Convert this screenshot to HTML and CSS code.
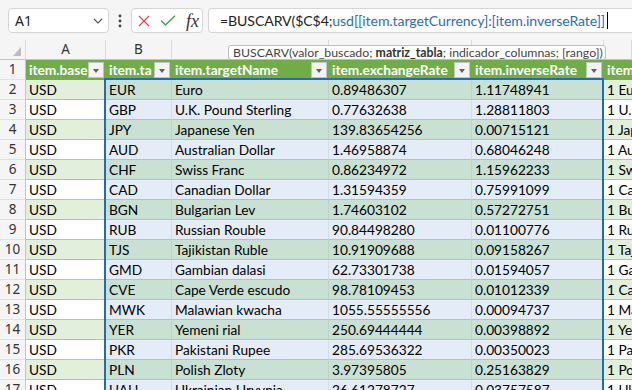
FILE: index.html
```html
<!DOCTYPE html>
<html lang="es">
<head>
  <meta charset="UTF-8">
  <meta name="viewport" content="width=device-width, initial-scale=1.0">
  <title>Hoja de cálculo</title>
  <link rel="stylesheet" href="styles.css">
</head>
<body>
  <div class="app">
    <!-- formula bar -->
    <div class="formula-bar">
      <div class="name-box">
        <span>A1</span>
        <svg class="chevron" width="10" height="6" viewBox="0 0 10 6"><path d="M1 1 L5 5 L9 1" fill="none" stroke="#555" stroke-width="1.2"/></svg>
      </div>
      <div class="dots">
        <svg width="4" height="14" viewBox="0 0 4 14"><circle cx="2" cy="2" r="1.4" fill="#444"/><circle cx="2" cy="7" r="1.4" fill="#444"/><circle cx="2" cy="12" r="1.4" fill="#444"/></svg>
      </div>
      <div class="fx-box">
        <svg class="icon-cancel" width="12" height="12" viewBox="0 0 12 12"><path d="M1 1 L11 11 M11 1 L1 11" stroke="#e5484d" stroke-width="1.3" fill="none"/></svg>
        <svg class="icon-enter" width="16" height="11" viewBox="0 0 16 11"><path d="M1 5.5 L5.5 10 L15 0.8" stroke="#3aa356" stroke-width="1.4" fill="none"/></svg>
        <span class="fx">fx</span>
      </div>
      <div class="formula-input">
        <span>=BUSCARV($C$4;</span><span class="ref">usd[[item.targetCurrency]:[item.inverseRate]]</span><span class="caret"></span>
      </div>
    </div>

    <!-- grid -->
    <div class="sheet">
      <div class="row col-heads">
        <div class="corner"><svg width="8" height="9" viewBox="0 0 8 9"><path d="M8 0 L8 9 L0 9 Z" fill="#bdbdbd"/></svg></div>
        <div class="ch">A</div><div class="ch">B</div><div class="ch"></div><div class="ch"></div><div class="ch"></div><div class="ch"></div>
      </div>

      <div class="row table-head">
        <div class="rh">1</div>
        <div class="c">item.base<span class="filter"></span></div>
        <div class="c">item.ta<span class="filter"></span></div>
        <div class="c">item.targetName<span class="filter"></span></div>
        <div class="c">item.exchangeRate<span class="filter"></span></div>
        <div class="c">item.inverseRate<span class="filter"></span></div>
        <div class="c">item.targetDescription</div>
      </div>

      <div class="row band"><div class="rh">2</div><div class="c">USD</div><div class="c">EUR</div><div class="c">Euro</div><div class="c">0.89486307</div><div class="c">1.11748941</div><div class="c">1 Euro = 1.11748941 USD</div></div>
      <div class="row"><div class="rh">3</div><div class="c">USD</div><div class="c">GBP</div><div class="c">U.K. Pound Sterling</div><div class="c">0.77632638</div><div class="c">1.28811803</div><div class="c">1 U.K. Pound Sterling</div></div>
      <div class="row band"><div class="rh">4</div><div class="c">USD</div><div class="c">JPY</div><div class="c">Japanese Yen</div><div class="c">139.83654256</div><div class="c">0.00715121</div><div class="c">1 Japanese Yen</div></div>
      <div class="row"><div class="rh">5</div><div class="c">USD</div><div class="c">AUD</div><div class="c">Australian Dollar</div><div class="c">1.46958874</div><div class="c">0.68046248</div><div class="c">1 Australian Dollar</div></div>
      <div class="row band"><div class="rh">6</div><div class="c">USD</div><div class="c">CHF</div><div class="c">Swiss Franc</div><div class="c">0.86234972</div><div class="c">1.15962233</div><div class="c">1 Swiss Franc</div></div>
      <div class="row"><div class="rh">7</div><div class="c">USD</div><div class="c">CAD</div><div class="c">Canadian Dollar</div><div class="c">1.31594359</div><div class="c">0.75991099</div><div class="c">1 Canadian Dollar</div></div>
      <div class="row band"><div class="rh">8</div><div class="c">USD</div><div class="c">BGN</div><div class="c">Bulgarian Lev</div><div class="c">1.74603102</div><div class="c">0.57272751</div><div class="c">1 Bulgarian Lev</div></div>
      <div class="row"><div class="rh">9</div><div class="c">USD</div><div class="c">RUB</div><div class="c">Russian Rouble</div><div class="c">90.84498280</div><div class="c">0.01100776</div><div class="c">1 Russian Rouble</div></div>
      <div class="row band"><div class="rh">10</div><div class="c">USD</div><div class="c">TJS</div><div class="c">Tajikistan Ruble</div><div class="c">10.91909688</div><div class="c">0.09158267</div><div class="c">1 Tajikistan Ruble</div></div>
      <div class="row"><div class="rh">11</div><div class="c">USD</div><div class="c">GMD</div><div class="c">Gambian dalasi</div><div class="c">62.73301738</div><div class="c">0.01594057</div><div class="c">1 Gambian dalasi</div></div>
      <div class="row band"><div class="rh">12</div><div class="c">USD</div><div class="c">CVE</div><div class="c">Cape Verde escudo</div><div class="c">98.78109453</div><div class="c">0.01012339</div><div class="c">1 Cape Verde escudo</div></div>
      <div class="row"><div class="rh">13</div><div class="c">USD</div><div class="c">MWK</div><div class="c">Malawian kwacha</div><div class="c">1055.55555556</div><div class="c">0.00094737</div><div class="c">1 Malawian kwacha</div></div>
      <div class="row band"><div class="rh">14</div><div class="c">USD</div><div class="c">YER</div><div class="c">Yemeni rial</div><div class="c">250.69444444</div><div class="c">0.00398892</div><div class="c">1 Yemeni rial</div></div>
      <div class="row"><div class="rh">15</div><div class="c">USD</div><div class="c">PKR</div><div class="c">Pakistani Rupee</div><div class="c">285.69536322</div><div class="c">0.00350023</div><div class="c">1 Pakistani Rupee</div></div>
      <div class="row band"><div class="rh">16</div><div class="c">USD</div><div class="c">PLN</div><div class="c">Polish Zloty</div><div class="c">3.97395805</div><div class="c">0.25163829</div><div class="c">1 Polish Zloty</div></div>
      <div class="row"><div class="rh">17</div><div class="c">USD</div><div class="c">UAH</div><div class="c">Ukrainian Hryvnia</div><div class="c">26.61278727</div><div class="c">0.03757587</div><div class="c">1 Ukrainian Hryvnia</div></div>

      <div class="tooltip">BUSCARV(valor_buscado; <b>matriz_tabla</b>; indicador_columnas; [rango])</div>
      <div class="selection"></div>
    </div>
  </div>
</body>
</html>
```

FILE: styles.css
```css
body {
  margin: 0;
  background: #fff;
  font-family: "Noto Sans", "Open Sans", sans-serif;
  overflow: hidden;
}

.app {
  width: 632px;
  height: 390px;
  overflow: hidden;
  display: flex;
  flex-direction: column;
}

/* ---- formula bar ---- */
.formula-bar {
  flex: none;
  height: 40px;
  box-sizing: border-box;
  padding: 8px 0 0 8px;
  background: #f5f5f5;
  display: flex;
  align-items: flex-start;
}

.name-box {
  width: 101px;
  height: 25px;
  box-sizing: border-box;
  background: #fff;
  border: 1px solid #d6d6d6;
  border-radius: 4px;
  display: flex;
  align-items: center;
  justify-content: space-between;
  padding: 0 5px 0 6px;
  font-size: 14px;
  color: #222;
}

.dots {
  width: 22px;
  height: 25px;
  display: flex;
  align-items: center;
  justify-content: center;
}

.fx-box {
  width: 72px;
  height: 25px;
  box-sizing: border-box;
  background: #fff;
  border: 1px solid #d6d6d6;
  border-radius: 4px;
  display: flex;
  align-items: center;
  padding-left: 6px;
}

.icon-enter { margin-left: 10px; }

.fx {
  margin-left: 10px;
  font-family: "Liberation Serif", serif;
  font-style: italic;
  font-size: 18px;
  color: #333;
  line-height: 1;
}

.formula-input {
  flex: 1;
  height: 25px;
  margin-left: 5px;
  box-sizing: border-box;
  background: #fff;
  border: 1px solid #d6d6d6;
  border-right: none;
  border-radius: 4px 0 0 4px;
  display: flex;
  align-items: center;
  padding-left: 11px;
  font-family: "Lato", "Noto Sans", sans-serif;
  font-size: 14.1px;
  letter-spacing: -0.1px;
  color: #222;
  white-space: nowrap;
  overflow: hidden;
}

.formula-input .ref { color: #2b6cc4; }

.caret {
  display: inline-block;
  width: 1px;
  height: 17px;
  margin-left: 2px;
  background: #000;
}

/* ---- sheet ---- */
.sheet {
  position: relative;
  flex: 1;
  overflow: hidden;
  font-family: "Lato", "Liberation Sans", sans-serif;
  font-size: 13.7px;
}

.row {
  display: grid;
  grid-template-columns: 26px 80px 66px 157px 143px 132px 1fr;
  height: 20px;
}

.row > div {
  box-sizing: border-box;
  white-space: nowrap;
  overflow: hidden;
  line-height: 19px;
}

.col-heads > div {
  background: #f5f5f5;
  border-right: 1px solid #dadada;
  border-bottom: 1px solid #c4c4c4;
  text-align: center;
  color: #333;
  font-family: "Noto Sans", sans-serif;
  font-size: 13.5px;
}

.corner {
  display: flex;
  align-items: flex-end;
  justify-content: flex-end;
  padding: 0 4px 3px 0;
}

.rh {
  background: #f5f5f5;
  border-right: 1px solid #c4c4c4;
  border-bottom: 1px solid #e1e1e1;
  text-align: center;
  color: #333;
  font-family: "Noto Sans", sans-serif;
  font-size: 13.5px;
}

.c {
  padding: 0 3px;
  color: #000;
  border-bottom: 1px solid #a9d08e;
  background: #fff;
}

/* selected block B:E */
.row .c:nth-child(n+3):nth-child(-n+6) {
  background: #e4edf7;
  border-right: 1px solid #d3dde6;
}
.row.band .c { background: #e2efda; }
.row.band .c:nth-child(n+3):nth-child(-n+6) { background: #c9e1d3; border-right-color: #bcd3c6; }

.table-head .c,
.table-head .c:nth-child(n+3):nth-child(-n+6) {
  position: relative;
  background: #70ad47;
  color: #fff;
  font-weight: 700;
  border-right: none;
  border-bottom: 1px solid #70ad47;
}

.filter {
  position: absolute;
  right: 2px;
  top: 2px;
  width: 16px;
  height: 16px;
  box-sizing: border-box;
  background: #f3f3f3;
  border: 1px solid #c2c2c2;
}

.filter::after {
  content: "";
  position: absolute;
  left: 4px;
  top: 6px;
  border-left: 3.5px solid transparent;
  border-right: 3.5px solid transparent;
  border-top: 4px solid #5f5f5f;
}

.tooltip {
  position: absolute;
  left: 228px;
  top: 5px;
  width: 378px;
  height: 15px;
  box-sizing: border-box;
  background: #fff;
  border: 1px solid #bdbdbd;
  border-radius: 3px;
  padding: 0 4px;
  font-family: "Lato", "Noto Sans", sans-serif;
  font-size: 12.3px;
  line-height: 13px;
  color: #444;
  white-space: nowrap;
  overflow: hidden;
}

.tooltip b { color: #333; }

.selection {
  position: absolute;
  left: 104px;
  top: 38px;
  width: 500px;
  height: 400px;
  box-sizing: border-box;
  border: 2px solid #1f6cb9;
  pointer-events: none;
}
```
